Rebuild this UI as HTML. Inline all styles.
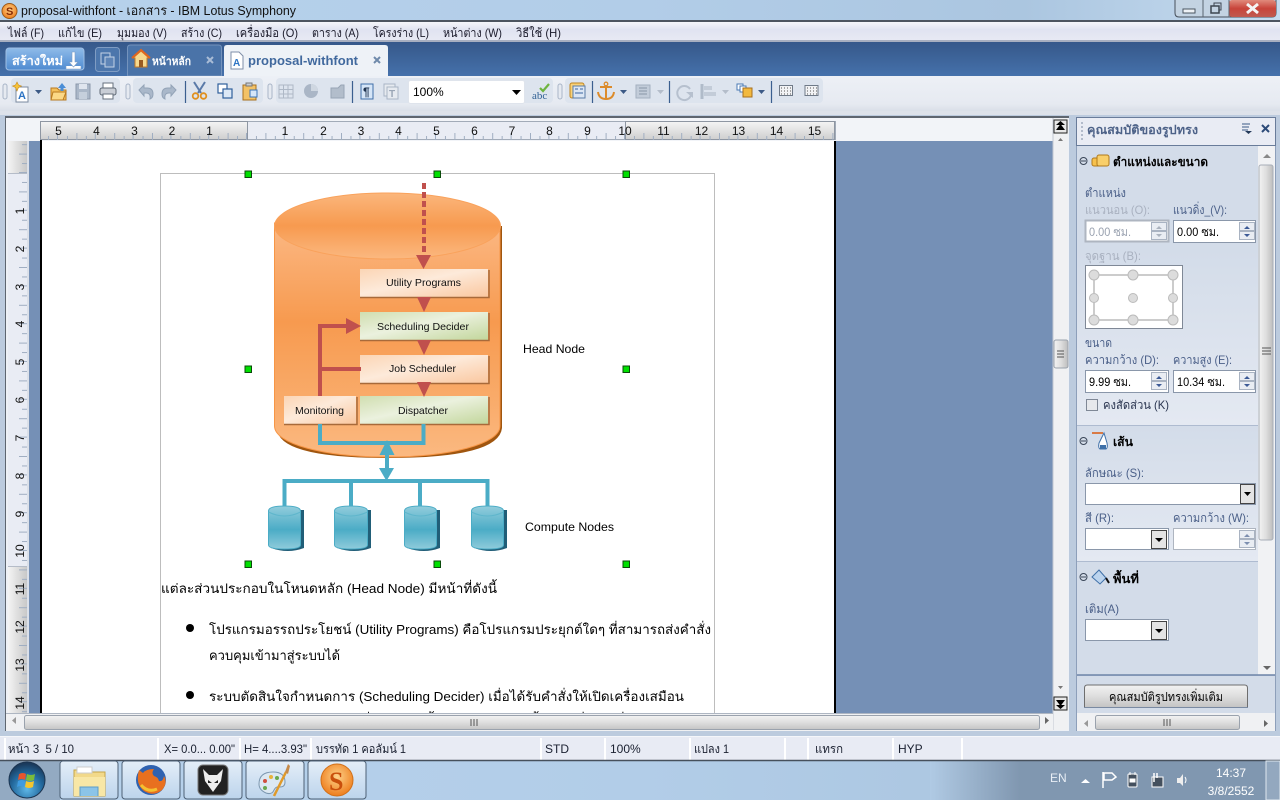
<!DOCTYPE html>
<html><head><meta charset="utf-8"><title>proposal-withfont</title>
<style>
html,body{margin:0;padding:0;width:1280px;height:800px;overflow:hidden;background:#b4cfe9}
svg{display:block}
text{font-family:"Liberation Sans","Noto Sans CJK SC","WenQuanYi Zen Hei",sans-serif;font-size:12px;fill:#111;white-space:pre}
.m{font-size:12px;fill:#1a1a2a}
.p{font-size:12px;fill:#4a5f88}
.d{font-size:12px;fill:#a9b1c0}
.i{font-size:12px;fill:#000}
.b{font-weight:bold;fill:#000}
.s{font-size:12px;fill:#1a2030}
.r{font-size:12px;fill:#111}
.t{font-size:13px;fill:#000}
.dg{font-size:10.5px;fill:#111}
</style></head><body>
<svg xmlns="http://www.w3.org/2000/svg" width="1280" height="800" viewBox="0 0 1280 800">
<defs>
<linearGradient id="sky" x1="0" x2="1" y1="0" y2="0"><stop offset="0" stop-color="#b7d2ec"/><stop offset=".5" stop-color="#b2cde8"/><stop offset=".8" stop-color="#abc6e0"/><stop offset="1" stop-color="#c6dbef"/></linearGradient>
<linearGradient id="menu" x1="0" x2="0" y1="0" y2="1"><stop offset="0" stop-color="#f4f5fa"/><stop offset=".4" stop-color="#e0e3f1"/><stop offset="1" stop-color="#e8eaf4"/></linearGradient>
<linearGradient id="tabs" x1="0" x2="0" y1="0" y2="1"><stop offset="0" stop-color="#36588a"/><stop offset="1" stop-color="#4571ab"/></linearGradient>
<linearGradient id="tb" x1="0" x2="0" y1="0" y2="1"><stop offset="0" stop-color="#edf0f6"/><stop offset=".8" stop-color="#e6eaf1"/><stop offset="1" stop-color="#d9dfe8"/></linearGradient>
<linearGradient id="newb" x1="0" x2="0" y1="0" y2="1"><stop offset="0" stop-color="#8fbbe9"/><stop offset=".5" stop-color="#6ea3de"/><stop offset="1" stop-color="#4f8bd0"/></linearGradient>
<linearGradient id="rulg" x1="0" x2="0" y1="0" y2="1"><stop offset="0" stop-color="#f4f4f4"/><stop offset="1" stop-color="#cfcfcf"/></linearGradient>
<linearGradient id="rulv" x1="0" x2="1" y1="0" y2="0"><stop offset="0" stop-color="#f4f4f4"/><stop offset="1" stop-color="#c8c8c8"/></linearGradient>
<linearGradient id="scr" x1="0" x2="0" y1="0" y2="1"><stop offset="0" stop-color="#f3f3f3"/><stop offset=".5" stop-color="#dedede"/><stop offset="1" stop-color="#c4c4c4"/></linearGradient>
<linearGradient id="scv" x1="0" x2="1" y1="0" y2="0"><stop offset="0" stop-color="#f3f3f3"/><stop offset=".5" stop-color="#dedede"/><stop offset="1" stop-color="#bdbdbd"/></linearGradient>
<linearGradient id="sec" x1="0" x2="0" y1="0" y2="1"><stop offset="0" stop-color="#d3dce9"/><stop offset="1" stop-color="#e4e9f2"/></linearGradient>
<linearGradient id="cyl" gradientUnits="userSpaceOnUse" x1="0" x2="0" y1="223" y2="458"><stop offset="0" stop-color="#fbb884"/><stop offset=".42" stop-color="#f79a4f"/><stop offset=".75" stop-color="#f9ab6a"/><stop offset="1" stop-color="#fbb981"/></linearGradient>
<linearGradient id="cylt" x1="0" x2="0" y1="0" y2="1"><stop offset="0" stop-color="#fbb67c"/><stop offset=".5" stop-color="#f79a4f"/><stop offset="1" stop-color="#fbb880"/></linearGradient>
<linearGradient id="org" x1="0" x2="1" y1="0" y2="1"><stop offset="0" stop-color="#fbd5b5"/><stop offset=".45" stop-color="#fdeada"/><stop offset="1" stop-color="#fac79f"/></linearGradient>
<linearGradient id="grn" x1="0" x2="1" y1="0" y2="1"><stop offset="0" stop-color="#d0deb0"/><stop offset=".45" stop-color="#ebf1de"/><stop offset="1" stop-color="#c2d69b"/></linearGradient>
<linearGradient id="blu" x1="0" x2="0" y1="0" y2="1"><stop offset="0" stop-color="#92cddc"/><stop offset=".55" stop-color="#4bacc6"/><stop offset="1" stop-color="#8fcbdb"/></linearGradient>
<linearGradient id="bar" x1="0" x2="1" y1="0" y2="0"><stop offset="0" stop-color="#b0cae4"/><stop offset="1" stop-color="#8097b0"/></linearGradient>
<linearGradient id="task" x1="0" x2="0" y1="0" y2="1"><stop offset="0" stop-color="#e4eef8"/><stop offset="1" stop-color="#bcd4ec"/></linearGradient>
<linearGradient id="close" x1="0" x2="0" y1="0" y2="1"><stop offset="0" stop-color="#e08a7c"/><stop offset=".5" stop-color="#c8443a"/><stop offset="1" stop-color="#c05a50"/></linearGradient>
<radialGradient id="orb" cx=".5" cy=".75" r=".7"><stop offset="0" stop-color="#5fb8e8"/><stop offset=".6" stop-color="#236a9f"/><stop offset="1" stop-color="#1a3a5c"/></radialGradient>
<radialGradient id="sym" cx=".5" cy=".4" r=".6"><stop offset="0" stop-color="#fdd28a"/><stop offset="1" stop-color="#ee7d1c"/></radialGradient>
<pattern id="tickh" patternUnits="userSpaceOnUse" x="247" y="0" width="37.8" height="200"><path d="M9.45 136v4M18.9 133v7M28.35 136v4M37.3 133v7" stroke="#a0aec2" fill="none"/></pattern>
<pattern id="tickv" patternUnits="userSpaceOnUse" x="0" y="173" width="200" height="37.8"><path d="M22 9.45h5M19 18.9h8M22 28.35h5M19 37.3h8" stroke="#a0aec2" fill="none"/></pattern>
<clipPath id="pg"><rect x="41" y="141" width="795" height="572"/></clipPath>
</defs>

<!-- title bar -->
<rect width="1280" height="800" fill="url(#sky)"/>
<circle cx="9.500" cy="11" r="7.500" fill="url(#sym)" stroke="#9a5a1a"/>
<text x="6" y="15" font-size="11" style="font-size:11px;font-weight:bold;fill:#8a2c05">S</text>
<text x="21" y="15" textLength="275" lengthAdjust="spacingAndGlyphs" style="font-size:13px;fill:#111">proposal-withfont - เอกสาร - IBM Lotus Symphony</text>
<path d="M1175 0v13q0 4 4 4h93q4 0 4-4V0" fill="#c3d3e2" stroke="#47505c"/>
<rect x="1229" y="0" width="47" height="17" rx="3" fill="url(#close)"/>
<path d="M1203 0v17M1229 0v17" stroke="#5a6470"/>
<rect x="1183" y="9" width="12" height="4" fill="#eef2f6" stroke="#4a5560"/>
<rect x="1211" y="6" width="8" height="7" fill="none" stroke="#3c4650" stroke-width="1.500"/><path d="M1214 6V3h7v7h-2" fill="none" stroke="#3c4650"/>
<path d="M1247 4l11 9M1258 4l-11 9" stroke="#f4f4f4" stroke-width="3"/>

<!-- menu -->
<rect y="20" width="1280" height="2" fill="#4d5560"/>
<rect y="22" width="1280" height="19" fill="url(#menu)"/>
<rect y="40" width="1280" height="2" fill="#a8afc0"/>
<g class="m">
<text class="m" x="8" y="37" textLength="36" lengthAdjust="spacingAndGlyphs">ไฟล์ (F)</text>
<text class="m" x="58" y="37" textLength="44" lengthAdjust="spacingAndGlyphs">แก้ไข (E)</text>
<text class="m" x="117" y="37" textLength="50" lengthAdjust="spacingAndGlyphs">มุมมอง (V)</text>
<text class="m" x="181" y="37" textLength="41" lengthAdjust="spacingAndGlyphs">สร้าง (C)</text>
<text class="m" x="236" y="37" textLength="62" lengthAdjust="spacingAndGlyphs">เครื่องมือ (O)</text>
<text class="m" x="312" y="37" textLength="47" lengthAdjust="spacingAndGlyphs">ตาราง (A)</text>
<text class="m" x="373" y="37" textLength="56" lengthAdjust="spacingAndGlyphs">โครงร่าง (L)</text>
<text class="m" x="443" y="37" textLength="59" lengthAdjust="spacingAndGlyphs">หน้าต่าง (W)</text>
<text class="m" x="516" y="37" textLength="45" lengthAdjust="spacingAndGlyphs">วิธีใช้ (H)</text>
</g>

<!-- tab bar -->
<rect y="42" width="1280" height="34" fill="url(#tabs)"/>
<rect x="6" y="48" width="78" height="22" rx="3" fill="url(#newb)" stroke="#9fbfe4"/>
<text x="12" y="65" textLength="51" lengthAdjust="spacingAndGlyphs" style="font-size:12px;font-weight:bold;fill:#fff">สร้างใหม่</text>
<path d="M72 52v10h-3l4.500 5 4.500-5h-3V52zM66 66v3h15v-3" fill="#fff" stroke="#7d9cc4" stroke-width=".6"/>
<rect x="95.500" y="47.500" width="24" height="24" rx="3" fill="#4c76ac" stroke="#7f9cc3"/>
<rect x="101" y="53" width="9" height="11" fill="none" stroke="#c3d2e6"/><rect x="105" y="57" width="9" height="10" fill="#5f85b7" stroke="#c3d2e6"/>
<path d="M127.500 76V48q0-3 3-3h88q3 0 3 3v28z" fill="#4a73a8" stroke="#7493bd"/>
<path d="M133 58l8-7 8 7h-2v9h-12v-9z" fill="#f6d98f" stroke="#c67a25"/><path d="M132 58l9-8 9 8" fill="none" stroke="#e0651f" stroke-width="2"/><rect x="139" y="60" width="4" height="7" fill="#9a5a20"/>
<text x="152" y="65" textLength="39" lengthAdjust="spacingAndGlyphs" style="font-size:11px;font-weight:bold;fill:#fff">หน้าหลัก</text>
<path d="M207 57l6 6M213 57l-6 6" stroke="#a9bcd6" stroke-width="2"/>
<path d="M224 76V48q0-3 3-3h158q3 0 3 3v28z" fill="#eef2f7"/>
<path d="M231 52h8l4 4v13h-12z" fill="#fff" stroke="#7f8fa8"/><text x="233" y="66" style="font-size:10px;font-weight:bold;fill:#2d74c4">A</text>
<text x="248" y="65" textLength="110" lengthAdjust="spacingAndGlyphs" style="font-size:13px;font-weight:bold;fill:#41699e">proposal-withfont</text>
<path d="M374 57l6 6M380 57l-6 6" stroke="#6f8aab" stroke-width="2"/>

<!-- toolbar -->
<rect y="76" width="1280" height="35" fill="url(#tb)"/>
<rect x="11" y="78" width="109" height="25" rx="4" fill="#dde4ee"/>
<rect x="133" y="78" width="130" height="25" rx="4" fill="#dde4ee"/>
<rect x="276" y="78" width="277" height="25" rx="4" fill="#dde4ee"/>
<rect x="565" y="78" width="258" height="25" rx="4" fill="#dde4ee"/>
<g fill="#e6eaf1" stroke="#a9b5c8"><rect x="3" y="84" width="4" height="15" rx="2"/><rect x="126" y="84" width="4" height="15" rx="2"/><rect x="268" y="84" width="4" height="15" rx="2"/><rect x="558" y="84" width="4" height="15" rx="2"/></g>
<path d="M185.500 81v22M352.500 81v22M592.500 81v22M669.500 81v22M771.500 81v22" stroke="#3b5f8f" stroke-width="1.200"/>
<!-- icons -->
<path d="M16 87h12v15H16z" fill="#fff" stroke="#7d8ba0"/><text x="18" y="99" style="font-size:11px;font-weight:bold;fill:#2d74c4">A</text>
<path d="M17 82l1.500 3 3 1-3 1.500L17 91l-1.500-3.500-3-1.500 3-1z" fill="#f5c33b" stroke="#c98a1a" stroke-width=".6"/>
<path d="M35 90h7l-3.500 4z" fill="#3c5a86"/>
<path d="M51 88h6l2 2h7v10H51z" fill="#f4c05b" stroke="#b97a20"/><path d="M53 92h13l-3 8H51z" fill="#fbd886" stroke="#b97a20"/><path d="M62 83l-4 5h2.500v3h3v-3H66z" fill="#4b8ed6"/>
<rect x="76" y="84" width="14" height="15" fill="#aab7c8" stroke="#8c99ab"/><rect x="79" y="84" width="8" height="5" fill="#dfe5ee"/><rect x="79" y="92" width="8" height="7" fill="#c5cfdc"/>
<rect x="103" y="83" width="10" height="6" fill="#fff" stroke="#66707e"/><rect x="100" y="88" width="16" height="7" rx="2" fill="#c9ced6" stroke="#5e6874"/><rect x="103" y="94" width="10" height="5" fill="#fff" stroke="#66707e"/>
<path d="M139 90l5-5v3h3q6 0 6 6 0 4-3 5 1-6-4-6h-2v3z" fill="#aab8ca" stroke="#93a3b7"/>
<path d="M176 90l-5-5v3h-3q-6 0-6 6 0 4 3 5-1-6 4-6h2v3z" fill="#aab8ca" stroke="#93a3b7"/>
<path d="M194 82l7 11M205 82l-7 11" stroke="#5a7aa8" stroke-width="2"/><circle cx="195.500" cy="96" r="2.800" fill="none" stroke="#e0901f" stroke-width="1.800"/><circle cx="203.500" cy="96" r="2.800" fill="none" stroke="#e0901f" stroke-width="1.800"/>
<rect x="218" y="84" width="9" height="9" fill="#fff" stroke="#2f5f9c" stroke-width="1.200"/><rect x="223" y="89" width="9" height="9" fill="#dce8f6" stroke="#2f5f9c" stroke-width="1.200"/>
<rect x="243" y="85" width="13" height="15" fill="#f3c266" stroke="#a8701d"/><rect x="246" y="83" width="6" height="3" fill="#c8ccd2" stroke="#777"/><rect x="250" y="90" width="7" height="7" fill="#d6e6f8" stroke="#3a74b8"/>
<g fill="none" stroke="#aeb8c6"><rect x="279" y="85" width="14" height="13"/><path d="M279 89.500h14M279 94h14M283.500 85v13M288 85v13"/></g>
<circle cx="311" cy="91" r="7" fill="#aab6c6"/><path d="M311 91v-7a7 7 0 0 1 7 7z" fill="#cfd7e1"/>
<path d="M331 88h7l3-3h3v13h-13z" fill="#b2bdcb" stroke="#98a5b5"/>
<rect x="361" y="84" width="12" height="15" fill="#d5e5f7" stroke="#3f6ea8"/><text x="363" y="96" style="font-size:12px;font-weight:bold;fill:#1f3350">¶</text>
<rect x="384" y="84" width="11" height="12" fill="#e6eaf0" stroke="#a9b5c5"/><rect x="387" y="87" width="11" height="12" fill="#e6eaf0" stroke="#a9b5c5"/><text x="389" y="97" style="font-size:10px;font-weight:bold;fill:#9aa6b6">T</text>
<rect x="408.500" y="80.500" width="116" height="23" rx="2" fill="#fff" stroke="#dfe4ec"/>
<text x="413" y="96" style="font-size:12px;fill:#000">100%</text>
<path d="M512 90h9l-4.500 5z" fill="#000"/>
<text x="532" y="99" style="font-size:11px;fill:#2f5f93;font-family:'Liberation Serif',serif">abc</text><path d="M540 88l3 3 6-7" stroke="#6eb43f" stroke-width="2.200" fill="none"/>
<rect x="570" y="83" width="14" height="15" rx="2" fill="#f9d27a" stroke="#c0851f"/><rect x="573" y="86" width="12" height="12" fill="#dbe6f4" stroke="#5a7ca6"/><path d="M575 89h3M580 89h3M575 93h8" stroke="#3a64a0"/>
<path d="M606 85v13M600 87h12M598 92q1 7 8 7 7 0 8-7" stroke="#dc8b2b" stroke-width="2" fill="none"/><circle cx="606" cy="84" r="1.800" fill="none" stroke="#dc8b2b" stroke-width="1.300"/>
<path d="M620 90h7l-3.500 4z" fill="#3c5a86"/>
<rect x="636" y="85" width="14" height="13" fill="#c2ccd9" stroke="#a4b0c0"/><path d="M639 88h8M639 91h8M639 94h8" stroke="#8896a8"/>
<path d="M657 90h7l-3.500 4z" fill="#b4bdca"/>
<path d="M690 89a7 7 0 1 0 1 6" fill="none" stroke="#b6c0ce" stroke-width="2"/><path d="M686 92h7v6z" fill="#b6c0ce"/>
<path d="M702 84v15" stroke="#b0bbc9" stroke-width="3"/><rect x="704" y="86" width="8" height="4" fill="#c3ccd8"/><rect x="704" y="92" width="12" height="4" fill="#c3ccd8"/>
<path d="M722 90h7l-3.500 4z" fill="#b4bdca"/>
<rect x="737" y="84" width="6" height="6" fill="#fff" stroke="#4a7ab4"/><rect x="740" y="86" width="6" height="6" fill="#fff" stroke="#4a7ab4"/><rect x="743" y="88" width="9" height="9" fill="#f2b93f" stroke="#a8701d"/>
<path d="M758 90h7l-3.500 4z" fill="#3c5a86"/>
<g stroke="#6f7a88" fill="#f2f3f5"><rect x="779.500" y="85.500" width="13" height="10"/><rect x="805" y="85.500" width="13" height="10"/></g>
<path d="M781 88h10M781 91h10M781 94h10M807 88h10M807 91h10M807 94h10" stroke="#555" stroke-dasharray="1 2"/>
<rect y="111" width="1280" height="4" fill="#dde2ea"/><rect y="115" width="1280" height="622" fill="#bccbde"/>

<!-- doc frame -->
<rect x="5" y="116" width="1064" height="616" fill="#5e6670"/>
<rect x="6" y="118" width="1063" height="613" fill="#eef1f6"/>
<rect x="29" y="141" width="1024" height="572" fill="#7590b6"/>
<rect x="6" y="118" width="1047" height="23" fill="#f2f4f8"/>
<!-- page -->
<rect x="40" y="140" width="2" height="573" fill="#000"/>
<rect x="42" y="141" width="792" height="572" fill="#fff"/>
<rect x="834" y="141" width="2" height="572" fill="#000"/>
<!-- h ruler -->
<rect x="40.500" y="121.500" width="795" height="18" fill="#e9ecf4" stroke="#a2abb8"/>
<rect x="40.500" y="121.500" width="207" height="18" fill="url(#rulg)" stroke="#8e96a2"/>
<rect x="625.500" y="121.500" width="209" height="18" fill="url(#rulg)" stroke="#8e96a2"/>
<rect x="41" y="122" width="794" height="18" fill="url(#tickh)"/>
<g class="r" text-anchor="middle">
<text class="r" text-anchor="middle" x="58.500" y="135">5</text><text class="r" text-anchor="middle" x="96.500" y="135">4</text><text class="r" text-anchor="middle" x="134.500" y="135">3</text><text class="r" text-anchor="middle" x="172" y="135">2</text><text class="r" text-anchor="middle" x="209.500" y="135">1</text>
<text class="r" text-anchor="middle" x="285" y="135">1</text><text class="r" text-anchor="middle" x="323.500" y="135">2</text><text class="r" text-anchor="middle" x="361" y="135">3</text><text class="r" text-anchor="middle" x="398.500" y="135">4</text><text class="r" text-anchor="middle" x="436.500" y="135">5</text><text class="r" text-anchor="middle" x="474.500" y="135">6</text><text class="r" text-anchor="middle" x="512" y="135">7</text><text class="r" text-anchor="middle" x="549.500" y="135">8</text><text class="r" text-anchor="middle" x="587.500" y="135">9</text><text class="r" text-anchor="middle" x="625" y="135">10</text><text class="r" text-anchor="middle" x="663.500" y="135">11</text><text class="r" text-anchor="middle" x="701.500" y="135">12</text><text class="r" text-anchor="middle" x="738.500" y="135">13</text><text class="r" text-anchor="middle" x="776.500" y="135">14</text><text class="r" text-anchor="middle" x="814.500" y="135">15</text>
</g>
<!-- v ruler -->
<rect x="8" y="141" width="19" height="572" fill="#e9ecf4"/>
<rect x="8" y="141" width="19" height="32" fill="url(#rulv)"/>
<rect x="8" y="567" width="19" height="146" fill="url(#rulv)"/>
<path d="M8 173.500h19M8 566.500h19" stroke="#b5bcc8"/>
<rect x="8" y="141" width="19" height="572" fill="url(#tickv)"/>
<path d="M28 141v572" stroke="#c8d0dc"/>
<g>
<text class="r" text-anchor="middle" transform="translate(24 211) rotate(-90)">1</text>
<text class="r" text-anchor="middle" transform="translate(24 249) rotate(-90)">2</text>
<text class="r" text-anchor="middle" transform="translate(24 287) rotate(-90)">3</text>
<text class="r" text-anchor="middle" transform="translate(24 324) rotate(-90)">4</text>
<text class="r" text-anchor="middle" transform="translate(24 362) rotate(-90)">5</text>
<text class="r" text-anchor="middle" transform="translate(24 400) rotate(-90)">6</text>
<text class="r" text-anchor="middle" transform="translate(24 438) rotate(-90)">7</text>
<text class="r" text-anchor="middle" transform="translate(24 476) rotate(-90)">8</text>
<text class="r" text-anchor="middle" transform="translate(24 514) rotate(-90)">9</text>
<text class="r" text-anchor="middle" transform="translate(24 551) rotate(-90)">10</text>
<text class="r" text-anchor="middle" transform="translate(24 589) rotate(-90)">11</text>
<text class="r" text-anchor="middle" transform="translate(24 627) rotate(-90)">12</text>
<text class="r" text-anchor="middle" transform="translate(24 665) rotate(-90)">13</text>
<text class="r" text-anchor="middle" transform="translate(24 703) rotate(-90)">14</text>
</g>

<!-- frame -->
<path d="M160.500 713V173.500H714.500V713" fill="none" stroke="#bdbdbd"/>
<!-- diagram -->
<path d="M277 226v202q0 30 111 30t114-30V226z" fill="#a0560f"/>
<path d="M274.500 223v203c0 18 50 31 112.500 31s113-13 113-31V223z" fill="url(#cyl)" stroke="#f79646"/>
<ellipse cx="387.500" cy="226" rx="113" ry="33" fill="url(#cylt)" stroke="#f9a25c"/>
<g fill="url(#org)"><rect x="360" y="269" width="128" height="28"/><rect x="360" y="355" width="128" height="28"/><rect x="284" y="396" width="72" height="28"/></g>
<g fill="url(#grn)"><rect x="360" y="312" width="128" height="28"/><rect x="360" y="396" width="128" height="28"/></g>
<path d="M360 297.500h129V270M360 340.500h129V313M360 383.500h129V356M284 424.500h73V397M360 424.500h129V397" fill="none" stroke="#a86a3a" stroke-width="1.500"/>
<path d="M424 183v70" stroke="#c0504d" stroke-width="4" stroke-dasharray="6 3"/>
<path d="M416 255h15l-7.500 14zM417 297h14l-7 15zM417 340h14l-7 15zM417 382h14l-7 15z" fill="#c0504d"/>
<path d="M320 396V326h28M320 369h41" fill="none" stroke="#c0504d" stroke-width="4"/>
<path d="M346 318l15 8-15 8z" fill="#c0504d"/>
<path d="M320 424v19h103.500v-19" fill="none" stroke="#4bacc6" stroke-width="4"/>
<path d="M387 453v16" stroke="#4bacc6" stroke-width="4"/>
<path d="M387 440l7.500 15h-15zM379 468h15l-7.500 13z" fill="#4bacc6"/>
<path d="M284.500 508V481h203v27M351 481v26M420 481v26" fill="none" stroke="#4bacc6" stroke-width="4"/>
<g>
<path d="M271 510h33v38q-16 6-33 0z" fill="#215e78"/><path d="M337 510h34v38q-17 6-34 0z" fill="#215e78"/><path d="M407 510h33v38q-16 6-33 0z" fill="#215e78"/><path d="M474 510h33v38q-16 6-33 0z" fill="#215e78"/>
<path d="M268.500 511q0-5 16-5t16 5v34q0 4-16 4t-16-4z" fill="url(#blu)" stroke="#4bacc6"/>
<path d="M334.500 511q0-5 16.500-5t16.500 5v34q0 4-16.500 4t-16.500-4z" fill="url(#blu)" stroke="#4bacc6"/>
<path d="M404.500 511q0-5 16-5t16 5v34q0 4-16 4t-16-4z" fill="url(#blu)" stroke="#4bacc6"/>
<path d="M471.500 511q0-5 16-5t16 5v34q0 4-16 4t-16-4z" fill="url(#blu)" stroke="#4bacc6"/>
<path d="M268.500 512q16 8 32 0M334.500 512q16 8 33 0M404.500 512q16 8 32 0M471.500 512q16 8 32 0" fill="none" stroke="#5fb6cc"/>
</g>
<text class="dg" x="386" y="286" textLength="75" lengthAdjust="spacingAndGlyphs">Utility Programs</text>
<text class="dg" x="377" y="330" textLength="92" lengthAdjust="spacingAndGlyphs">Scheduling Decider</text>
<text class="dg" x="389" y="372" textLength="67" lengthAdjust="spacingAndGlyphs">Job Scheduler</text>
<text class="dg" x="295" y="414" textLength="49" lengthAdjust="spacingAndGlyphs">Monitoring</text>
<text class="dg" x="398" y="414" textLength="50" lengthAdjust="spacingAndGlyphs">Dispatcher</text>
<text x="523" y="353" textLength="62" lengthAdjust="spacingAndGlyphs" style="font-size:12px;fill:#000">Head Node</text>
<text x="525" y="531" textLength="89" lengthAdjust="spacingAndGlyphs" style="font-size:12px;fill:#000">Compute Nodes</text>
<g fill="#00e000" stroke="#0a4a0a"><rect x="245" y="171" width="6.500" height="6.500"/><rect x="434" y="171" width="6.500" height="6.500"/><rect x="623" y="171" width="6.500" height="6.500"/><rect x="245" y="366" width="6.500" height="6.500"/><rect x="623" y="366" width="6.500" height="6.500"/><rect x="245" y="561" width="6.500" height="6.500"/><rect x="434" y="561" width="6.500" height="6.500"/><rect x="623" y="561" width="6.500" height="6.500"/></g>
<!-- body text -->
<g clip-path="url(#pg)">
<text class="t" x="161" y="593" textLength="336" lengthAdjust="spacingAndGlyphs">แต่ละส่วนประกอบในโหนดหลัก (Head Node) มีหน้าที่ดังนี้</text>
<circle cx="190" cy="628" r="4" fill="#000"/>
<text class="t" x="209" y="634" textLength="502" lengthAdjust="spacingAndGlyphs">โปรแกรมอรรถประโยชน์ (Utility Programs) คือโปรแกรมประยุกต์ใดๆ ที่สามารถส่งคำสั่ง</text>
<text class="t" x="209" y="660" textLength="131" lengthAdjust="spacingAndGlyphs">ควบคุมเข้ามาสู่ระบบได้</text>
<circle cx="190" cy="695" r="4" fill="#000"/>
<text class="t" x="209" y="701" textLength="475" lengthAdjust="spacingAndGlyphs">ระบบตัดสินใจกำหนดการ (Scheduling Decider) เมื่อได้รับคำสั่งให้เปิดเครื่องเสมือน</text>
<text class="t" x="209" y="725" textLength="470" lengthAdjust="spacingAndGlyphs">จริงจะทำการตัดสินใจว่าเครื่องเสมือนนั้นควรจะถูกสร้างขึ้นบนเครื่องใดที่เหมาะสม</text>
</g>

<!-- v scrollbar -->
<rect x="1053" y="118" width="15" height="612" fill="#f0f1f3"/>
<path d="M1053 118v612" stroke="#c2c8d2"/>
<rect x="1054" y="120" width="13" height="13" fill="#e8e8e8" stroke="#222"/><path d="M1056 130l4.500-6 4.500 6z M1056 125l4.500-4 4.500 4z" fill="#000"/>
<path d="M1058 141h5l-2.500-3z" fill="#777"/>
<rect x="1054" y="340" width="14" height="28" rx="2" fill="url(#scv)" stroke="#9aa2ad"/><path d="M1057 351h7M1057 354h7M1057 357h7" stroke="#555"/>
<path d="M1058 686h5l-2.500 3z" fill="#777"/>
<rect x="1054" y="697" width="13" height="13" fill="#e8e8e8" stroke="#222"/><path d="M1056 700l4.500 6 4.500-6z M1056 705l4.500 4 4.500-4z" fill="#000"/>
<!-- h scrollbar -->
<rect x="6" y="713" width="1047" height="18" fill="#f0f1f3"/>
<path d="M6 713.500h1047" stroke="#aeb6c2"/>
<path d="M16 717v7l-4-3.500z" fill="#999"/>
<rect x="24.500" y="715.500" width="1015" height="14" rx="2" fill="url(#scr)" stroke="#9aa2ad"/>
<path d="M471 719v7M474 719v7M477 719v7" stroke="#555"/>
<path d="M1045 717v7l4-3.500z" fill="#666"/>

<!-- side panel -->
<rect x="1069" y="116" width="211" height="621" fill="#bccbde"/>
<rect x="1076.500" y="117.500" width="199" height="28" fill="#e9ecf4" stroke="#697c9a"/>
<path d="M1082 122v20" stroke="#7a8aa2" stroke-dasharray="2 2"/>
<text x="1087" y="134" textLength="111" lengthAdjust="spacingAndGlyphs" style="font-size:12px;font-weight:bold;fill:#4d6288">คุณสมบัติของรูปทรง</text>
<path d="M1242 124h8M1242 127h7M1242 130h6" stroke="#3c5a86"/><path d="M1245 131h7l-3.500 3z" fill="#243a5a"/>
<path d="M1262 125l7 7M1269 125l-7 7" stroke="#2c4a78" stroke-width="2"/>
<rect x="1077" y="146" width="181" height="529" fill="#d3dce9"/>
<rect x="1077" y="250" width="181" height="175" fill="url(#sec)"/>
<rect x="1077" y="426" width="181" height="135" fill="url(#sec)"/>
<path d="M1077 425.500h181M1077 561.500h181" stroke="#aebbd0"/>
<rect x="1258" y="146" width="17" height="529" fill="#f1f2f4"/>
<path d="M1263 158h8l-4-4z" fill="#888"/>
<rect x="1259" y="165" width="14" height="375" rx="2" fill="url(#scv)" stroke="#a8aeb8"/>
<path d="M1262 348h9M1262 351h9M1262 354h9" stroke="#555"/>
<path d="M1263 666h8l-4 4z" fill="#666"/>
<path d="M1077 675h199" stroke="#6e85a8" stroke-width="1.500"/>
<rect x="1077" y="676" width="199" height="37" fill="#d3dce9"/>
<rect x="1077" y="713" width="199" height="18" fill="#f0f1f3"/>
<path d="M1076.500 146v585M1275.500 146v585" stroke="#8d9fba"/>
<!-- section 1 -->
<circle cx="1083.500" cy="161" r="3.500" fill="none" stroke="#3a4658"/><path d="M1081 161h5" stroke="#3a4658"/>
<rect x="1092" y="158" width="9" height="8" rx="2" fill="#f7c14c" stroke="#b07a1c"/><rect x="1097" y="155" width="12" height="11" rx="2" fill="#f9cf6a" stroke="#b07a1c"/>
<text x="1113" y="166" textLength="95" lengthAdjust="spacingAndGlyphs" class="b" style="font-size:12px;font-weight:bold">ตำแหน่งและขนาด</text>
<text class="p" x="1085" y="197" textLength="41" lengthAdjust="spacingAndGlyphs">ตำแหน่ง</text>
<text class="d" x="1085" y="214" textLength="65" lengthAdjust="spacingAndGlyphs">แนวนอน (O):</text>
<text class="p" x="1173" y="214" textLength="54" lengthAdjust="spacingAndGlyphs">แนวดิ่ง_(V):</text>
<rect x="1085.500" y="220.500" width="83" height="21" fill="#fff" stroke="#aeb5c0" stroke-width="2"/>
<text x="1089" y="236" textLength="42" lengthAdjust="spacingAndGlyphs" style="font-size:12px;fill:#9aa2b0">0.00 ซม.</text>
<rect x="1173.500" y="220.500" width="82" height="22" fill="#fff" stroke="#8a97aa"/>
<text x="1177" y="236" textLength="42" lengthAdjust="spacingAndGlyphs" class="i">0.00 ซม.</text>
<g fill="#e9edf3" stroke="#a9b3c2"><rect x="1151.500" y="222.500" width="15" height="8"/><rect x="1151.500" y="231.500" width="15" height="8"/><rect x="1239.500" y="222.500" width="15" height="8"/><rect x="1239.500" y="231.500" width="15" height="8"/></g>
<path d="M1156 229h6l-3-3zM1156 234h6l-3 3z" fill="#aab2be"/><path d="M1244 229h6l-3-3zM1244 234h6l-3 3z" fill="#3c5a96"/>
<text class="d" x="1085" y="260" textLength="56" lengthAdjust="spacingAndGlyphs">จุดฐาน (B):</text>
<rect x="1085.500" y="265.500" width="97" height="63" fill="#fff" stroke="#7f8896"/>
<rect x="1094" y="275" width="79" height="45" fill="none" stroke="#9a9a9a"/>
<g fill="#dcdcdc" stroke="#bbb"><circle cx="1094" cy="275" r="5"/><circle cx="1133" cy="275" r="5"/><circle cx="1173" cy="275" r="5"/><circle cx="1094" cy="298" r="4.500"/><circle cx="1133" cy="298" r="4.500"/><circle cx="1173" cy="298" r="4.500"/><circle cx="1094" cy="320" r="5"/><circle cx="1133" cy="320" r="5"/><circle cx="1173" cy="320" r="5"/></g>
<text class="p" x="1085" y="347" textLength="27" lengthAdjust="spacingAndGlyphs">ขนาด</text>
<text class="p" x="1085" y="364" textLength="74" lengthAdjust="spacingAndGlyphs">ความกว้าง (D):</text>
<text class="p" x="1173" y="364" textLength="59" lengthAdjust="spacingAndGlyphs">ความสูง (E):</text>
<rect x="1085.500" y="370.500" width="83" height="22" fill="#fff" stroke="#8a97aa"/>
<text x="1089" y="386" textLength="42" lengthAdjust="spacingAndGlyphs" class="i">9.99 ซม.</text>
<rect x="1173.500" y="370.500" width="82" height="22" fill="#fff" stroke="#8a97aa"/>
<text x="1177" y="386" textLength="48" lengthAdjust="spacingAndGlyphs" class="i">10.34 ซม.</text>
<g fill="#e9edf3" stroke="#a9b3c2"><rect x="1151.500" y="372.500" width="15" height="8"/><rect x="1151.500" y="381.500" width="15" height="8"/><rect x="1239.500" y="372.500" width="15" height="8"/><rect x="1239.500" y="381.500" width="15" height="8"/></g>
<path d="M1156 379h6l-3-3zM1156 384h6l-3 3zM1244 379h6l-3-3zM1244 384h6l-3 3z" fill="#3c5a96"/>
<rect x="1086.500" y="399.500" width="11" height="11" fill="#e6e8ec" stroke="#7f8896"/>
<text x="1103" y="409" textLength="66" lengthAdjust="spacingAndGlyphs" style="font-size:12px;fill:#2a3550">คงสัดส่วน (K)</text>
<!-- section 2 -->
<circle cx="1083.500" cy="441" r="3.500" fill="none" stroke="#3a4658"/><path d="M1081 441h5" stroke="#3a4658"/>
<path d="M1092 433h11" stroke="#d97a45" stroke-width="2"/><path d="M1104 433l3 10q1 5-1 6h-6q-2-1-1-6z" fill="#fff" stroke="#3f70a8"/><rect x="1100" y="445" width="6" height="4" fill="#3f70a8"/>
<text x="1113" y="446" textLength="20" lengthAdjust="spacingAndGlyphs" style="font-size:12px;font-weight:bold;fill:#000">เส้น</text>
<text class="p" x="1085" y="477" textLength="59" lengthAdjust="spacingAndGlyphs">ลักษณะ (S):</text>
<rect x="1085.500" y="483.500" width="170" height="21" fill="#fff" stroke="#8a97aa"/>
<rect x="1240.500" y="484.500" width="14" height="19" fill="#e4e4e4" stroke="#444"/><path d="M1244 492h7l-3.500 4z" fill="#000"/>
<text class="p" x="1085" y="522" textLength="29" lengthAdjust="spacingAndGlyphs">สี (R):</text>
<text class="p" x="1173" y="522" textLength="76" lengthAdjust="spacingAndGlyphs">ความกว้าง (W):</text>
<rect x="1085.500" y="528.500" width="83" height="21" fill="#fff" stroke="#8a97aa"/>
<rect x="1151.500" y="530.500" width="15" height="18" fill="#e4e4e4" stroke="#444"/><path d="M1155 538h8l-4 4z" fill="#000"/>
<rect x="1173.500" y="528.500" width="82" height="21" fill="#fff" stroke="#aeb5c0"/>
<g fill="#e9edf3" stroke="#a9b3c2"><rect x="1239.500" y="530.500" width="15" height="8"/><rect x="1239.500" y="539.500" width="15" height="8"/></g>
<path d="M1244 537h6l-3-3zM1244 542h6l-3 3z" fill="#7d8fb0"/>
<!-- section 3 -->
<circle cx="1083.500" cy="577" r="3.500" fill="none" stroke="#3a4658"/><path d="M1081 577h5" stroke="#3a4658"/>
<path d="M1099 570l7 8-6 6-8-7z" fill="#bcd4ee" stroke="#3f70a8"/><path d="M1106 578l3 5" stroke="#111" stroke-width="2"/>
<text x="1113" y="583" textLength="26" lengthAdjust="spacingAndGlyphs" style="font-size:12px;font-weight:bold;fill:#000">พื้นที่</text>
<text class="p" x="1085" y="613" textLength="34" lengthAdjust="spacingAndGlyphs">เติม(A)</text>
<rect x="1085.500" y="619.500" width="83" height="21" fill="#fff" stroke="#8a97aa"/>
<rect x="1151.500" y="621.500" width="15" height="18" fill="#e4e4e4" stroke="#444"/><path d="M1155 629h8l-4 4z" fill="#000"/>
<!-- button -->
<path d="M1084.500 707v-19q0-3 3-3h157q3 0 3 3v19" fill="url(#scr)" stroke="#6e6e6e"/>
<path d="M1084 707.500h164" stroke="#7a8aa2"/>
<text x="1109" y="701" textLength="114" lengthAdjust="spacingAndGlyphs" style="font-size:12px;fill:#000">คุณสมบัติรูปทรงเพิ่มเติม</text>
<path d="M1088 720v7l-4-3.500z" fill="#999"/>
<rect x="1095.500" y="715.500" width="144" height="14" rx="2" fill="url(#scr)" stroke="#9aa2ad"/>
<path d="M1164 719v7M1167 719v7M1170 719v7" stroke="#555"/>
<path d="M1264 720v7l4-3.500z" fill="#666"/>

<!-- status bar -->
<rect y="731" width="1280" height="6" fill="#bccbde"/>
<rect y="737" width="1280" height="23" fill="#e8ebf4"/>
<path d="M0 736.500h1280" stroke="#f4f6fa"/>
<g stroke="#fff" stroke-width="2"><path d="M5 738v22M158 738v22M240 738v22M311 738v22M541 738v22M605 738v22M690 738v22M785 738v22M808 738v22M893 738v22M962 738v22"/></g>
<g>
<text class="s" x="8" y="753" textLength="66" lengthAdjust="spacingAndGlyphs">หน้า 3  5 / 10</text>
<text class="s" x="164" y="753" textLength="71" lengthAdjust="spacingAndGlyphs">X= 0.0... 0.00"</text>
<text class="s" x="244" y="753" textLength="63" lengthAdjust="spacingAndGlyphs">H= 4....3.93"</text>
<text class="s" x="316" y="753" textLength="90" lengthAdjust="spacingAndGlyphs">บรรทัด 1 คอลัมน์ 1</text>
<text class="s" x="545" y="753">STD</text>
<text class="s" x="610" y="753">100%</text>
<text class="s" x="694" y="753" textLength="35" lengthAdjust="spacingAndGlyphs">แปลง 1</text>
<text class="s" x="815" y="753" textLength="28" lengthAdjust="spacingAndGlyphs">แทรก</text>
<text class="s" x="898" y="753">HYP</text>
</g>

<!-- taskbar -->
<rect y="760" width="1280" height="40" fill="url(#sky)"/>
<rect x="1020" y="761" width="260" height="39" fill="#8097b0"/>
<rect x="930" y="761" width="90" height="39" fill="url(#bar)"/>
<rect y="760" width="60" height="40" fill="#93aac2"/>
<path d="M0 760.500h1280" stroke="#46505c" stroke-width="1.500"/>
<circle cx="27" cy="780" r="18" fill="url(#orb)" stroke="#1c3450"/>
<path d="M19 774q4-2 7 0l-1 6q-3-2-7 0z" fill="#e8552d"/><path d="M27 774q4 2 8 0l-1 6q-4 2-8 0z" fill="#7cbb3a"/><path d="M18 781q4-2 7 0l-1 6q-3-2-7 0z" fill="#3f9be0"/><path d="M26 781q4 2 8 0l-1 6q-4 2-8 0z" fill="#f5c52e"/>
<g fill="url(#task)" stroke="#4e6176"><rect x="60" y="761" width="58" height="38" rx="3"/><rect x="122" y="761" width="58" height="38" rx="3"/><rect x="184" y="761" width="58" height="38" rx="3"/><rect x="246" y="761" width="58" height="38" rx="3"/><rect x="308" y="761" width="58" height="38" rx="3"/></g>
<path d="M74 770h11l3 2h17v24H74z" fill="#f2d98a" stroke="#c6a548"/><rect x="77" y="767" width="15" height="6" fill="#fff" stroke="#ccc"/><path d="M74 777h31v19H74z" fill="#f8e7a6"/><path d="M80 796v-9h18v9" fill="#8bc4e8" stroke="#5c9cc8"/>
<circle cx="151" cy="780" r="15" fill="#2f62b0"/><path d="M139 770q-4 14 5 21 10 6 18-1 6-7 2-14-1 6-5 5-1-4-5-5-3-3 0-7-8 0-11 4z" fill="#e8701f"/><path d="M141 785q7 8 16 4" fill="none" stroke="#f5c030" stroke-width="3"/>
<rect x="198" y="765" width="30" height="30" rx="5" fill="#222" stroke="#777"/><path d="M203 769l6 6h8l6-6-2 12-8 11-8-11z" fill="#eee"/><path d="M208 780l4 3-4 0zM218 780l-4 3 4 0z" fill="#222"/>
<path d="M259 784q0-12 14-12 12 0 12 10 0 5-5 5-4-1-6 3-2 5-8 3-7-3-7-9z" fill="#dce8f2" stroke="#7c97b0"/><circle cx="265" cy="781" r="2" fill="#d0503f"/><circle cx="271" cy="777" r="2" fill="#e8b23a"/><circle cx="265" cy="788" r="2" fill="#6aa84f"/><circle cx="277" cy="778" r="2" fill="#6aa84f"/><path d="M274 796l12-24" stroke="#e09a2a" stroke-width="2.500"/><path d="M285 772l3-8 2 2-2 8z" fill="#c58a4a"/>
<circle cx="337" cy="780" r="16" fill="url(#sym)" stroke="#d0701a"/><text x="329" y="790" style="font-size:26px;font-weight:bold;fill:#c94f0c;font-family:'Liberation Serif',serif">S</text>
<text x="1050" y="782" style="font-size:12px;fill:#e8eef5">EN</text>
<path d="M1081 783h9l-4.500-4z" fill="#fff"/>
<path d="M1103 772v16" stroke="#fff" stroke-width="1.500"/><path d="M1104 773h8l4 4-4 3h-8z" fill="none" stroke="#fff" stroke-width="1.500"/>
<rect x="1128" y="774" width="9" height="13" rx="1" fill="#44505e" stroke="#fff"/><path d="M1130 775v-3M1135 775v-3M1130 779h5v3h-5z" stroke="#fff" fill="#fff"/>
<rect x="1152" y="777" width="11" height="10" fill="#44505e" stroke="#fff"/><path d="M1154 773v9M1157 773v5" stroke="#fff" stroke-width="1.500"/>
<path d="M1177 778h3l3-4v12l-3-3h-3z" fill="#eee"/><path d="M1185 777q2 3 0 6" fill="none" stroke="#fff"/>
<text x="1231" y="777" text-anchor="middle" style="font-size:12px;fill:#fff">14:37</text>
<text x="1231" y="795" text-anchor="middle" style="font-size:12px;fill:#fff">3/8/2552</text>
<rect x="1266" y="761" width="14" height="39" fill="#93a8bf" stroke="#dfe7ef"/>
</svg>
</body></html>
